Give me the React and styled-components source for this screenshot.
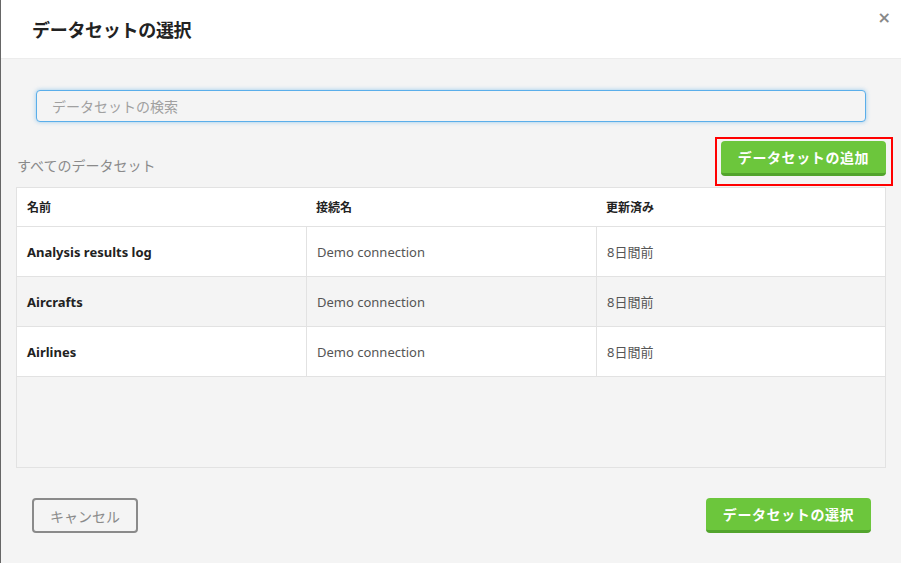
import React from "react";
import styled, { createGlobalStyle } from "styled-components";

const GlobalStyle = createGlobalStyle`
  html, body {
    margin: 0;
    padding: 0;
    background: #2a3640;
  }
  body {
    font-family: "Noto Sans", "Noto Sans CJK JP", sans-serif;
  }
  * {
    box-sizing: border-box;
  }
`;

const DATASETS = [
  { name: "Analysis results log", connection: "Demo connection", updated: "8日間前" },
  { name: "Aircrafts", connection: "Demo connection", updated: "8日間前" },
  { name: "Airlines", connection: "Demo connection", updated: "8日間前" },
];

const Modal = styled.div`
  width: 901px;
  height: 563px;
  background: #f4f4f4;
  border-left: 1px solid #666;
  display: flex;
  flex-direction: column;
  position: relative;
`;

const Header = styled.div`
  height: 59px;
  background: #fff;
  border-bottom: 1px solid #ececec;
  display: flex;
  align-items: center;
  padding-left: 31px;
`;

const Title = styled.h2`
  margin: 0;
  font-family: "Noto Sans CJK JP", sans-serif;
  font-size: 18px;
  font-weight: 700;
  color: #222;
  letter-spacing: -0.3px;
`;

const CloseButton = styled.span`
  position: absolute;
  top: 8px;
  right: 10px;
  font-size: 16px;
  font-weight: 700;
  color: #888;
  cursor: pointer;
  font-family: "DejaVu Sans", sans-serif;
`;

const Body = styled.div`
  flex: 1;
  display: flex;
  flex-direction: column;
  padding: 31px 15px 0 15px;
`;

const SearchWrap = styled.div`
  padding: 0 20px;
`;

const SearchInput = styled.input`
  width: 100%;
  height: 32px;
  border: 1px solid #5aaeea;
  border-radius: 4px;
  background: #f4f4f4;
  box-shadow: 0 0 4px rgba(90, 174, 234, 0.6);
  padding: 0 15px;
  font-family: "Noto Sans CJK JP", sans-serif;
  font-size: 14px;
  color: #333;
  outline: none;

  &::placeholder {
    color: #a0a0a0;
  }
`;

const ListBar = styled.div`
  display: flex;
  align-items: flex-end;
  justify-content: space-between;
  margin-top: 15px;
`;

const ListLabel = styled.span`
  font-family: "Noto Sans CJK JP", sans-serif;
  font-size: 14px;
  color: #8a8a8a;
  padding-bottom: 12px;
  padding-left: 1px;
`;

const Highlight = styled.div`
  border: 2px solid #ff0000;
  padding: 2px 5px 8px 4px;
  margin-right: -7px;
  margin-bottom: 1px;
`;

const GreenButton = styled.button`
  height: 35px;
  width: 165px;
  padding: 0;
  border: none;
  border-bottom: 3px solid #52a42c;
  border-radius: 4px;
  background: #6cc63c;
  color: #fff;
  font-family: "Noto Sans CJK JP", sans-serif;
  font-size: 14px;
  font-weight: 700;
  letter-spacing: 0.6px;
  cursor: pointer;
`;

const Table = styled.div`
  border: 1px solid #e2e2e2;
  background: #f4f4f4;
  display: flex;
  flex-direction: column;
  height: 281px;
`;

const Row = styled.div`
  display: grid;
  grid-template-columns: 289px 290px 1fr;
  height: ${(p) => (p.$head ? 39 : 50)}px;
  background: ${(p) => (p.$alt ? "#f4f4f4" : "#fff")};
  border-bottom: 1px solid #e2e2e2;
`;

const Cell = styled.div`
  display: flex;
  align-items: center;
  padding-left: 10px;
  font-size: ${(p) => (p.$head ? 12 : 13)}px;
  font-weight: ${(p) => (p.$bold ? 700 : 400)};
  color: ${(p) => (p.$bold ? "#222" : "#555")};
  border-left: ${(p) => (p.$divider ? "1px solid #e2e2e2" : "none")};
  font-family: "Noto Sans", "Noto Sans CJK JP", sans-serif;
`;

const Footer = styled.div`
  display: flex;
  justify-content: space-between;
  align-items: center;
  padding: 30px 15px 0 16px;
`;

const CancelButton = styled.button`
  height: 35px;
  width: 106px;
  border: 2px solid #8a8a8a;
  border-radius: 4px;
  background: #f4f4f4;
  color: #8a8a8a;
  font-family: "Noto Sans CJK JP", sans-serif;
  font-size: 14px;
  cursor: pointer;
`;

export default function App() {
  return (
    <>
      <GlobalStyle />
      <Modal>
        <Header>
          <Title>データセットの選択</Title>
        </Header>
        <CloseButton>×</CloseButton>
        <Body>
          <SearchWrap>
            <SearchInput placeholder="データセットの検索" autoFocus />
          </SearchWrap>
          <ListBar>
            <ListLabel>すべてのデータセット</ListLabel>
            <Highlight>
              <GreenButton>データセットの追加</GreenButton>
            </Highlight>
          </ListBar>
          <Table>
            <Row $head>
              <Cell $head $bold>名前</Cell>
              <Cell $head $bold>接続名</Cell>
              <Cell $head $bold>更新済み</Cell>
            </Row>
            {DATASETS.map((d, i) => (
              <Row key={d.name} $alt={i % 2 === 1}>
                <Cell $bold>{d.name}</Cell>
                <Cell $divider>{d.connection}</Cell>
                <Cell $divider>{d.updated}</Cell>
              </Row>
            ))}
          </Table>
          <Footer>
            <CancelButton>キャンセル</CancelButton>
            <GreenButton>データセットの選択</GreenButton>
          </Footer>
        </Body>
      </Modal>
    </>
  );
}
